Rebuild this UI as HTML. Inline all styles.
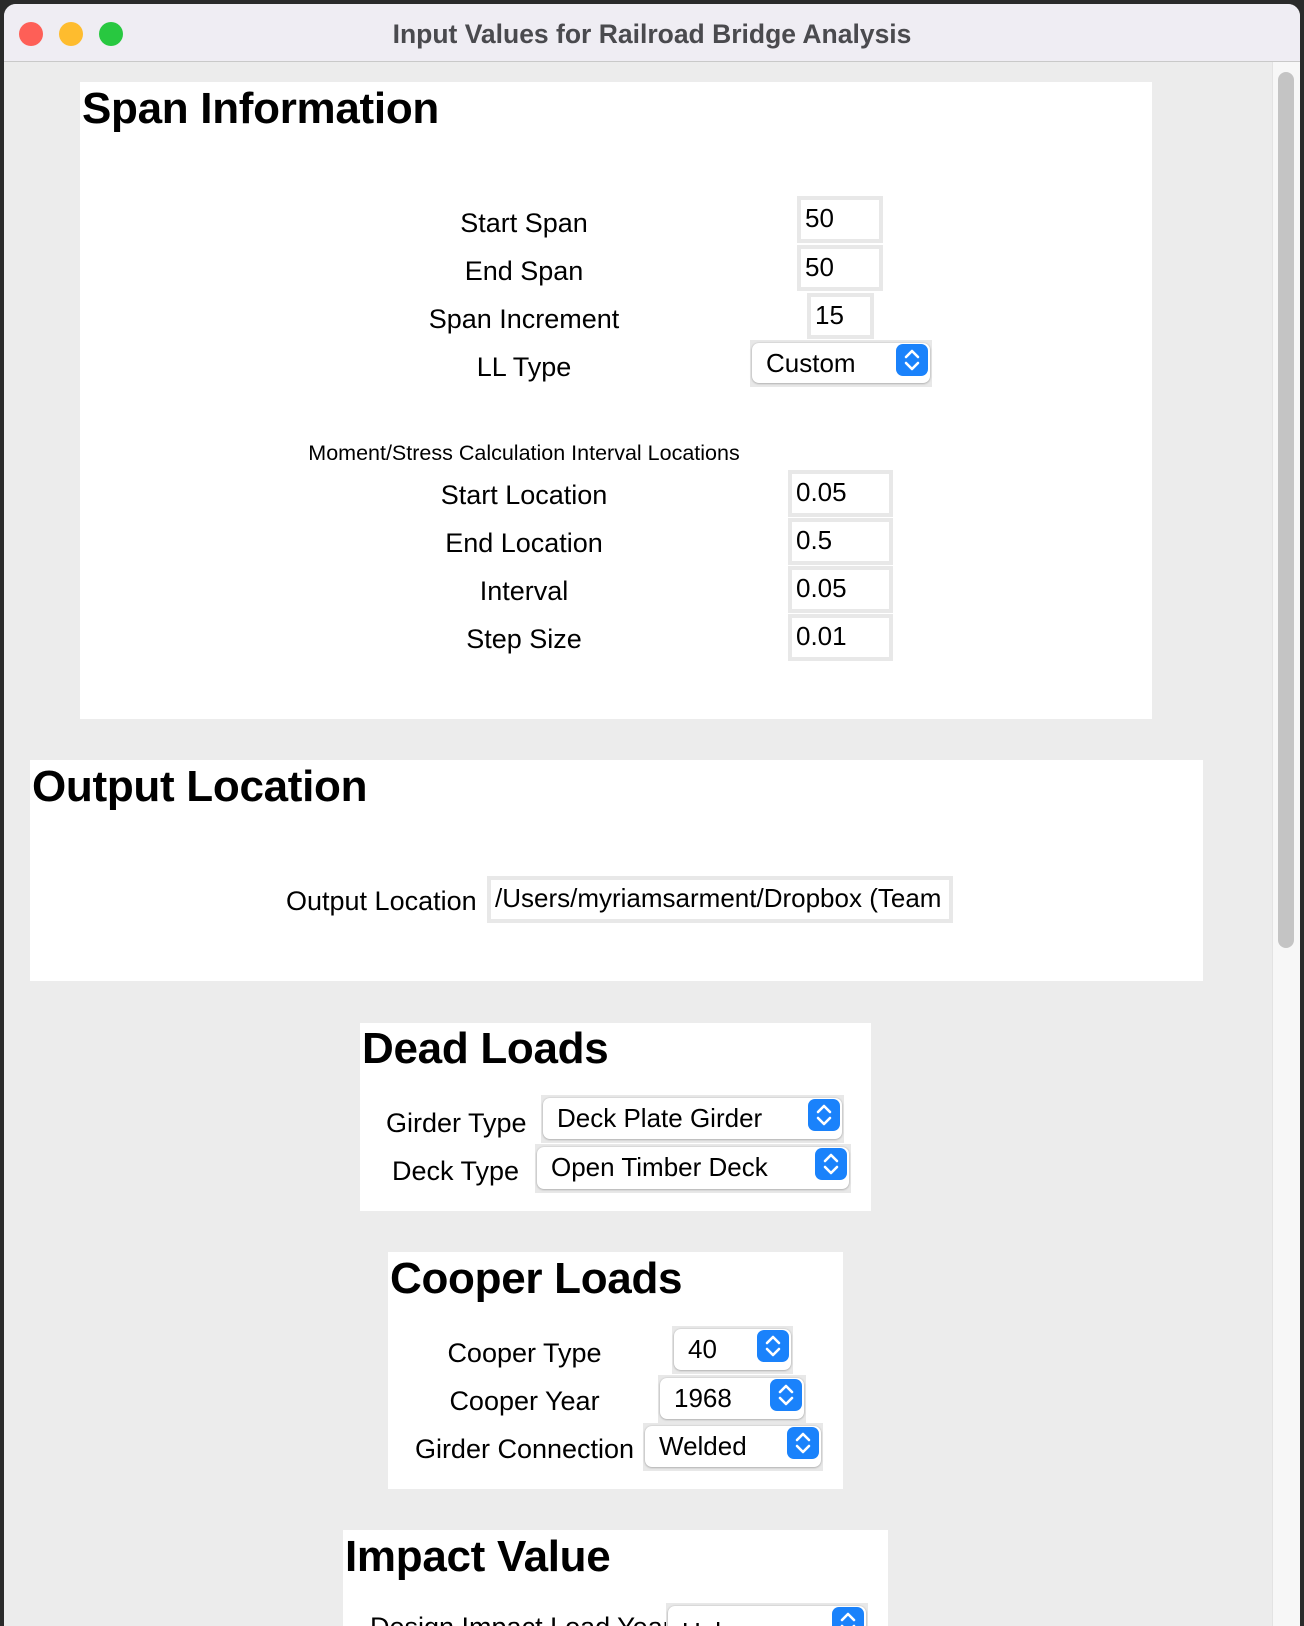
<!DOCTYPE html>
<html><head><meta charset="utf-8"><style>
*{margin:0;padding:0;box-sizing:border-box}
html{width:1304px;height:1626px;overflow:hidden}
body{width:1304px;height:1626px;background:#2a2a2a;position:relative;overflow:hidden;font-family:"Liberation Sans",Arial,sans-serif;color:#000}
.win{position:absolute;left:4px;top:4px;width:1296px;height:1622px;background:#ececec;border-radius:12px 12px 0 0;overflow:hidden}
.tb{position:absolute;left:0;top:0;width:100%;height:58px;background:#efedf3;border-bottom:1px solid #c9c9c9}
.tb .t{position:absolute;left:0;right:0;top:15px;text-align:center;font-weight:bold;font-size:26.5px;color:#4a4a4e}
.dot{position:absolute;top:18px;width:24px;height:24px;border-radius:50%}
.sb{position:absolute;left:1268px;top:58px;width:28px;height:1600px;background:#f7f7f7;border-left:1px solid #e3e3e3}
.th{position:absolute;left:1274px;top:68px;width:16px;height:876px;border-radius:8px;background:#c4c4c4}
.box{position:absolute;background:#fff}
.h{position:absolute;font-weight:bold;font-size:44px;line-height:48px;white-space:nowrap;letter-spacing:-0.3px}
.l{position:absolute;font-size:27px;line-height:30px;white-space:nowrap;text-align:center}
.in{position:absolute;background:#e8e8e8;padding:4px}
.in div{background:#fff;width:100%;height:100%;font-size:26px;line-height:36px;padding-left:4px;white-space:nowrap;overflow:hidden}
.sel{position:absolute;background:#e8e8e8}
.sel .w{position:absolute;left:2px;top:3px;right:2px;bottom:4px;background:#fff;border-radius:7px;box-shadow:0 0.5px 2px rgba(0,0,0,.35);font-size:26px;line-height:40px;padding-left:14px;white-space:nowrap}
.sel .b{position:absolute;right:4px;top:4px;width:32px;height:32px;border-radius:7px;background:#1a82fb}
</style></head><body>
<div class="win">
<div class="tb">
<div class="dot" style="left:15px;background:#fe5f57;"></div>
<div class="dot" style="left:55px;background:#febc2e;"></div>
<div class="dot" style="left:95px;background:#28c840;"></div>
<div class="t">Input Values for Railroad Bridge Analysis</div>
</div>
<div class="sb"></div><div class="th"></div>
</div>

<svg width="0" height="0" style="position:absolute"><defs><g id="chev"><path d="M10 13 L16 7 L22 13 M10 19 L16 25 L22 19" stroke="#fff" stroke-width="2.6" fill="none" stroke-linecap="round" stroke-linejoin="round"/></g></defs></svg>

<div class="box" style="left:80px;top:82px;width:1072px;height:637px"></div>
<div class="h" style="left:82px;top:85px">Span Information</div>
<div class="l" style="left:384px;width:280px;top:208px">Start Span</div>
<div class="in" style="left:797px;top:196px;width:86px;height:47px"><div>50</div></div>
<div class="l" style="left:384px;width:280px;top:256px">End Span</div>
<div class="in" style="left:797px;top:245px;width:86px;height:46px"><div>50</div></div>
<div class="l" style="left:384px;width:280px;top:304px">Span Increment</div>
<div class="in" style="left:807px;top:293px;width:67px;height:46px"><div>15</div></div>
<div class="l" style="left:384px;width:280px;top:352px">LL Type</div>
<div class="sel" style="left:750px;top:340px;width:182px;height:47px"><div class="w">Custom</div><div class="b"><svg width="32" height="32"><use href="#chev"/></svg></div></div>
<div class="l" style="left:224px;width:600px;top:440px;font-size:21.5px;line-height:26px">Moment/Stress Calculation Interval Locations</div>
<div class="l" style="left:384px;width:280px;top:480px">Start Location</div>
<div class="in" style="left:788px;top:470px;width:105px;height:47px"><div>0.05</div></div>
<div class="l" style="left:384px;width:280px;top:528px">End Location</div>
<div class="in" style="left:788px;top:518px;width:105px;height:47px"><div>0.5</div></div>
<div class="l" style="left:384px;width:280px;top:576px">Interval</div>
<div class="in" style="left:788px;top:566px;width:105px;height:47px"><div>0.05</div></div>
<div class="l" style="left:384px;width:280px;top:624px">Step Size</div>
<div class="in" style="left:788px;top:614px;width:105px;height:47px"><div>0.01</div></div>

<div class="box" style="left:30px;top:760px;width:1173px;height:221px"></div>
<div class="h" style="left:32px;top:763px">Output Location</div>
<div class="l" style="left:286px;top:886px">Output Location</div>
<div class="in" style="left:487px;top:876px;width:466px;height:47px"><div>/Users/myriamsarment/Dropbox (Team</div></div>

<div class="box" style="left:360px;top:1023px;width:511px;height:188px"></div>
<div class="h" style="left:362px;top:1025px">Dead Loads</div>
<div class="l" style="left:386px;top:1108px">Girder Type</div>
<div class="sel" style="left:541px;top:1095px;width:303px;height:48px"><div class="w">Deck Plate Girder</div><div class="b"><svg width="32" height="32"><use href="#chev"/></svg></div></div>
<div class="l" style="left:392px;top:1156px">Deck Type</div>
<div class="sel" style="left:535px;top:1144px;width:316px;height:49px"><div class="w">Open Timber Deck</div><div class="b"><svg width="32" height="32"><use href="#chev"/></svg></div></div>

<div class="box" style="left:388px;top:1252px;width:455px;height:237px"></div>
<div class="h" style="left:390px;top:1255px">Cooper Loads</div>
<div class="l" style="left:414px;width:221px;top:1338px">Cooper Type</div>
<div class="sel" style="left:672px;top:1326px;width:121px;height:48px"><div class="w">40</div><div class="b"><svg width="32" height="32"><use href="#chev"/></svg></div></div>
<div class="l" style="left:414px;width:221px;top:1386px">Cooper Year</div>
<div class="sel" style="left:658px;top:1375px;width:148px;height:48px"><div class="w">1968</div><div class="b"><svg width="32" height="32"><use href="#chev"/></svg></div></div>
<div class="l" style="left:404px;width:241px;top:1434px">Girder Connection</div>
<div class="sel" style="left:643px;top:1423px;width:180px;height:48px"><div class="w">Welded</div><div class="b"><svg width="32" height="32"><use href="#chev"/></svg></div></div>

<div class="box" style="left:343px;top:1530px;width:545px;height:96px"></div>
<div class="h" style="left:345px;top:1533px">Impact Value</div>
<div class="l" style="left:370px;top:1612px">Design Impact Load Year</div>
<div class="sel" style="left:666px;top:1603px;width:202px;height:23px;overflow:hidden"><div class="w" style="bottom:-30px;line-height:52px">Unknown</div><div class="b"><svg width="32" height="32"><use href="#chev"/></svg></div></div>
</body></html>
